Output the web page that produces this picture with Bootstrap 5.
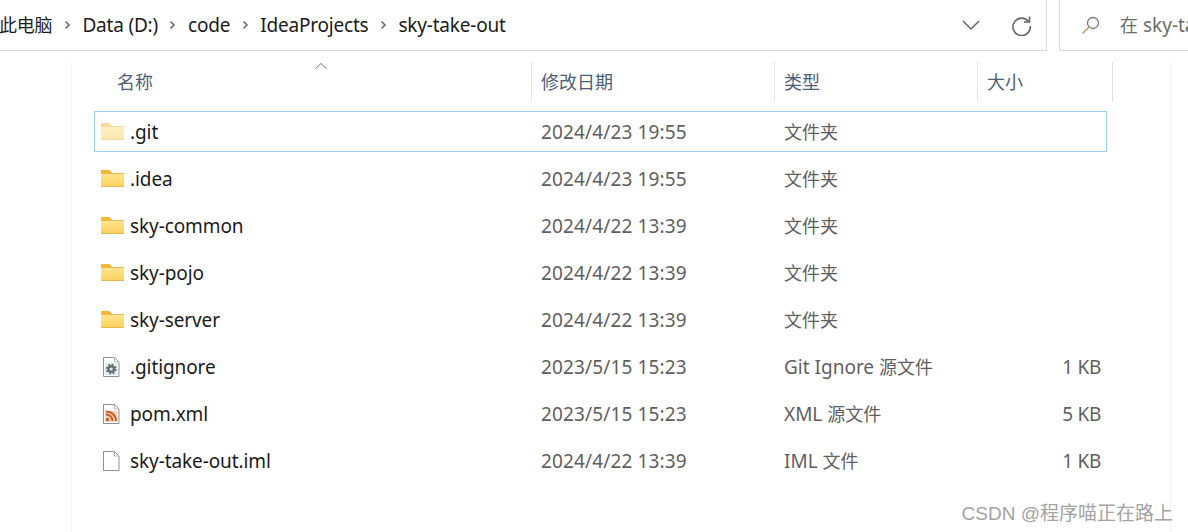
<!DOCTYPE html>
<html>
<head>
    <meta charset="UTF-8">
    <title>sky-take-out</title>
    <link href="https://cdn.jsdelivr.net/npm/bootstrap@5.3.2/dist/css/bootstrap.min.css" rel="stylesheet">
    <style>
        html, body { height: 532px; overflow: hidden; background: #fff; }
        body { font-family: "Noto Sans", "Noto Sans CJK SC", sans-serif; font-size: 19px; line-height: 24px; }
        .cjk { font-size: 18px; letter-spacing: 0; }
        .top-bar { height: 51px; gap: 12px; }
        .addr-box { width: 1047px; flex: none; border-right: 1px solid #d9d9d9; border-bottom: 1px solid #d9d9d9; padding-right: 14px; }
        .search-box { flex: 1; border-left: 1px solid #d9d9d9; border-bottom: 1px solid #d9d9d9; padding-left: 21px; color: #6d6d6d; white-space: nowrap; overflow: hidden; gap: 20px; }
        .search-box svg { flex: none; }
        .crumb { color: #1b1b1b; letter-spacing: -0.2px; }
        .crumb-first { margin-left: -1px; }
        .crumb-sep { width: 30px; text-align: center; line-height: 0; }
        .addr-tools { gap: 31px; }
        .file-pane { margin: 11px 0 0 71px; width: 1100px; height: 470px; border-left: 1px solid #f4f4f4; border-right: 1px solid #f4f4f4; padding-left: 22px; }
        .head-row { height: 40px; color: #4c607a; position: relative; width: 1019px; }
        .sort-mark { position: absolute; left: 220px; top: 0; }
        .head-row .cell-name { width: 437px; flex: none; padding-left: 23px; line-height: 40px; height: 40px; }
        .head-row .cell-date { width: 243px; flex: none; }
        .head-row .cell-type { width: 203px; flex: none; }
        .head-row .cell-size { width: 136px; flex: none; }
        .head-row .cell-date, .head-row .cell-type, .head-row .cell-size { padding-left: 9px; border-left: 1px solid #e5e5e5; height: 40px; line-height: 40px; }
        .file-list { margin-top: 9px; width: 1013px; }
        .file-row { height: 47px; color: #5f5f5f; }
        .file-row.is-sel { height: 41px; margin-bottom: 3px; box-shadow: inset 0 0 0 1px #99d1ff; }
        .file-row .cell-name { width: 436px; flex: none; color: #1b1b1b; display: flex; align-items: center; padding-left: 7px; gap: 6px; letter-spacing: -0.1px; }
        .file-row .cell-date { width: 245px; flex: none; padding-left: 11px; letter-spacing: 0.13px; }
        .file-row .cell-type { width: 203px; flex: none; padding-left: 9px; }
        .file-row .cell-size { width: 128px; flex: none; text-align: right; padding-right: 5px; letter-spacing: -0.3px; }
        .watermark { position: absolute; right: 15px; bottom: 6px; color: #a3a3a3; font-family: "Liberation Sans", "Noto Sans CJK SC", sans-serif; font-size: 19px; line-height: 24px; }
    </style>
</head>
<body>

<svg width="0" height="0" class="d-block position-absolute">
    <defs>
        <linearGradient id="folderFill" x1="0" y1="0" x2="0" y2="1"><stop offset="0" stop-color="#ffe48f"/><stop offset="1" stop-color="#fdd25f"/></linearGradient>
        <symbol id="ico-sep" viewBox="0 0 7 10"><path d="M1.500 1.500 5 5 1.500 8.500" fill="none" stroke="#6a6a6a" stroke-width="1.600"/></symbol>
        <symbol id="ico-folder" viewBox="0 0 23 17"><path d="M0 0h8l3 3h12v14H0z" fill="#e9b84a"/><path d="M0 0h8l3 3H0z" fill="#f7b731"/><path d="M0 4h23v12H0z" fill="url(#folderFill)"/></symbol>
        <symbol id="ico-page" viewBox="0 0 23 22"><path d="M2.500 1.500h11l4.500 4.500v14.500H2.500z" fill="#fff" stroke="#8f8f8f"/><path d="M13.500 1.500V6H18" fill="none" stroke="#b5b5b5"/></symbol>
    </defs>
</svg>

<div class="top-bar d-flex">
    <div class="addr-box d-flex align-items-center">
        <span class="crumb crumb-first cjk">此电脑</span>
        <span class="crumb-sep"><svg width="7" height="10"><use href="#ico-sep"/></svg></span>
        <span class="crumb">Data (D:)</span>
        <span class="crumb-sep"><svg width="7" height="10"><use href="#ico-sep"/></svg></span>
        <span class="crumb">code</span>
        <span class="crumb-sep"><svg width="7" height="10"><use href="#ico-sep"/></svg></span>
        <span class="crumb">IdeaProjects</span>
        <span class="crumb-sep"><svg width="7" height="10"><use href="#ico-sep"/></svg></span>
        <span class="crumb">sky-take-out</span>
        <span class="addr-tools ms-auto d-flex align-items-center">
            <svg width="18" height="10" viewBox="0 0 18 10"><path d="M1 1 9 9 17 1" fill="none" stroke="#666" stroke-width="1.500"/></svg>
            <svg width="21" height="21" viewBox="0 0 21 21"><path d="M17.500 6.500A8.700 8.700 0 1 0 19.300 11" fill="none" stroke="#666" stroke-width="1.600"/><path d="M18.500 1.500V7H13" fill="none" stroke="#666" stroke-width="1.600"/></svg>
        </span>
    </div>
    <div class="search-box d-flex align-items-center">
        <svg width="19" height="19" viewBox="0 0 19 19"><circle cx="12" cy="7" r="5.500" fill="none" stroke="#777" stroke-width="1.300"/><path d="M8 11 1.500 17.500" stroke="#c98f55" stroke-width="1.500"/></svg>
        <span><span class="cjk">在</span> sky-take-out <span class="cjk">中搜索</span></span>
    </div>
</div>

<div class="file-pane">
    <div class="head-row d-flex cjk">
        <svg class="sort-mark" width="14" height="8" viewBox="0 0 14 8"><path d="M1.500 6.500 7 1.500 12.500 6.500" fill="none" stroke="#777" stroke-width="1"/></svg>
        <div class="cell-name">名称</div>
        <div class="cell-date">修改日期</div>
        <div class="cell-type">类型</div>
        <div class="cell-size border-end">大小</div>
    </div>

    <div class="file-list">
        <div class="file-row is-sel d-flex align-items-center">
            <div class="cell-name"><svg class="opacity-50" width="23" height="17"><use href="#ico-folder"/></svg>.git</div>
            <div class="cell-date">2024/4/23 19:55</div>
            <div class="cell-type cjk">文件夹</div>
            <div class="cell-size"></div>
        </div>
        <div class="file-row d-flex align-items-center">
            <div class="cell-name"><svg width="23" height="17"><use href="#ico-folder"/></svg>.idea</div>
            <div class="cell-date">2024/4/23 19:55</div>
            <div class="cell-type cjk">文件夹</div>
            <div class="cell-size"></div>
        </div>
        <div class="file-row d-flex align-items-center">
            <div class="cell-name"><svg width="23" height="17"><use href="#ico-folder"/></svg>sky-common</div>
            <div class="cell-date">2024/4/22 13:39</div>
            <div class="cell-type cjk">文件夹</div>
            <div class="cell-size"></div>
        </div>
        <div class="file-row d-flex align-items-center">
            <div class="cell-name"><svg width="23" height="17"><use href="#ico-folder"/></svg>sky-pojo</div>
            <div class="cell-date">2024/4/22 13:39</div>
            <div class="cell-type cjk">文件夹</div>
            <div class="cell-size"></div>
        </div>
        <div class="file-row d-flex align-items-center">
            <div class="cell-name"><svg width="23" height="17"><use href="#ico-folder"/></svg>sky-server</div>
            <div class="cell-date">2024/4/22 13:39</div>
            <div class="cell-type cjk">文件夹</div>
            <div class="cell-size"></div>
        </div>
        <div class="file-row d-flex align-items-center">
            <div class="cell-name"><svg width="23" height="22" viewBox="0 0 23 22"><use href="#ico-page"/><rect x="4" y="7" width="12.500" height="12" fill="#e3ecee"/><circle cx="10.200" cy="13" r="2.800" fill="none" stroke="#5f7075" stroke-width="2.400"/><circle cx="10.200" cy="13" r="4.600" fill="none" stroke="#5f7075" stroke-width="1.600" stroke-dasharray="2 1.600"/></svg>.gitignore</div>
            <div class="cell-date">2023/5/15 15:23</div>
            <div class="cell-type">Git Ignore <span class="cjk">源文件</span></div>
            <div class="cell-size">1 KB</div>
        </div>
        <div class="file-row d-flex align-items-center">
            <div class="cell-name"><svg width="23" height="22" viewBox="0 0 23 22"><use href="#ico-page"/><rect x="4" y="8" width="12.500" height="11" fill="#f6d3bd"/><circle cx="6.500" cy="16.500" r="1.700" fill="#cf5a22"/><path d="M5 11.500a6.500 6.500 0 0 1 6.500 6.500M5 8.500a9.500 9.500 0 0 1 10 9.500" fill="none" stroke="#cf5a22" stroke-width="2"/></svg>pom.xml</div>
            <div class="cell-date">2023/5/15 15:23</div>
            <div class="cell-type">XML <span class="cjk">源文件</span></div>
            <div class="cell-size">5 KB</div>
        </div>
        <div class="file-row d-flex align-items-center">
            <div class="cell-name"><svg width="23" height="22"><use href="#ico-page"/></svg>sky-take-out.iml</div>
            <div class="cell-date">2024/4/22 13:39</div>
            <div class="cell-type">IML <span class="cjk">文件</span></div>
            <div class="cell-size">1 KB</div>
        </div>
    </div>
</div>

<div class="watermark">CSDN @程序喵正在路上</div>

<script src="https://cdn.jsdelivr.net/npm/bootstrap@5.3.2/dist/js/bootstrap.bundle.min.js"></script>
</body>
</html>
